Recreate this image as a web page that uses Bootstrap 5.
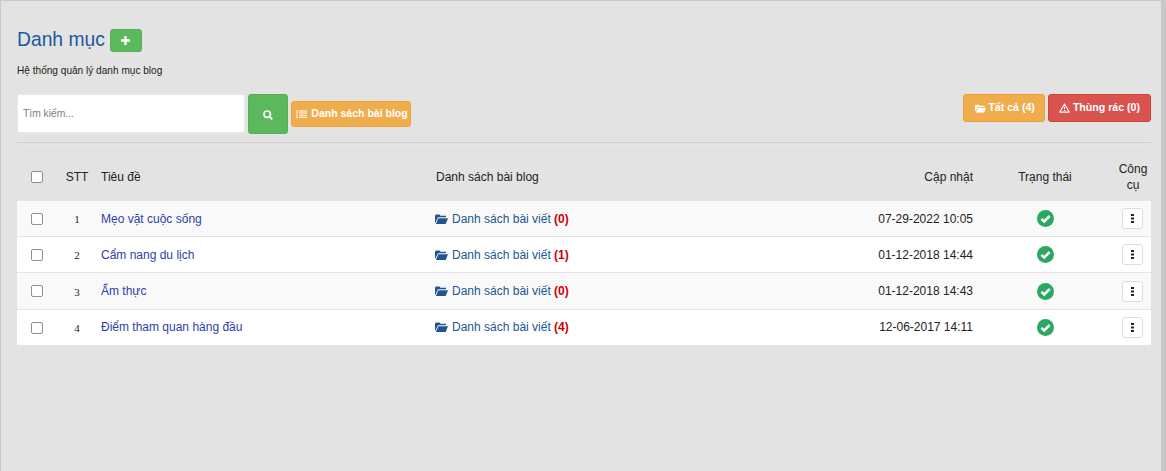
<!doctype html>
<html lang="vi"><head><meta charset="utf-8"><title>Danh mục</title>
<link href="https://cdn.jsdelivr.net/npm/bootstrap@5.3.0/dist/css/bootstrap.min.css" rel="stylesheet">
<style>
html,body{height:100%;overflow:hidden}
body{background:#e3e3e3;font-family:"Liberation Sans",Arial,sans-serif;font-size:12px;color:#222;}
.pg-shell{height:471px;border-top:1px solid #c8c8c8;border-left:1px solid #c8c8c8;border-right:5px solid #c8c8c8;padding:1px 10px 0 16px;}
.pg-head{padding-top:26px;height:92px}
.pg-title{font-size:19.3px;line-height:24px;color:#20589f;font-weight:400;margin:0}
.add-btn{width:32px;height:23px;padding:0;background:#5cb85c;border:1px solid #56b056;border-radius:3px;color:#fff;display:inline-flex;align-items:center;justify-content:center;margin-left:1px}
.pg-sub{font-size:10.1px;line-height:12px;margin:13px 0 0;color:#222}
.pg-tools{height:48px}
.srch{width:228px;height:39px;border:1px solid #e8e8e8;border-radius:2px;background:#fff;font-size:10.3px;padding:0 5px;color:#333}
.srch::placeholder{color:#808080;opacity:1}
.srch-btn{width:40px;height:40px;background:#5cb85c;border:1px solid #56b056;border-radius:3px;padding:2px 0 0;color:#fff;display:flex;align-items:center;justify-content:center}
.btn-o,.btn-r{font-size:10.6px;font-weight:700;color:#fff;border-radius:3px;display:inline-flex;align-items:center;gap:3px;white-space:nowrap}
.btn-o{background:#f0ad4e;border:1px solid #eea236}
.btn-r{background:#d9534f;border:1px solid #d43f3a}
.btn-o:hover{background:#f0ad4e;color:#fff}.btn-r:hover{background:#d9534f;color:#fff}
.btn-low{height:26px;width:120px;padding:0 0 0 2px;justify-content:center;margin-top:7px;gap:4px;font-size:10.5px}
.btn-tall{height:28px;padding:0 10px 0 10px}
.btn-all{padding-left:11px;gap:2px;padding-right:9px}
.tb-rule{border:0;border-top:1px solid #cdcdcd;opacity:1;margin:0 0 8px}
.cat-tbl{width:100%;table-layout:fixed;margin:0;font-size:12px;--bs-table-bg:transparent;border-top:1px solid #dfdfdf}
.cat-tbl th{font-weight:400;color:#222;vertical-align:middle;border-bottom:0;padding:0;height:49px;padding-top:1px;line-height:16px;background:transparent}
.cat-tbl td{height:36px;padding:0;vertical-align:middle;background:#fff;border-bottom:1px solid #e3e3e3;color:#222}
.cat-tbl tbody tr:nth-child(3) td{height:37px}
.cat-tbl tbody tr:nth-child(odd) td{background:#f9f9f9}
.cat-tbl tbody tr:first-child td{padding-top:1px}
.cat-tbl tbody tr:last-child td:not(:first-child):not(.num){padding-bottom:1px}
.cat-tbl a.t-link{color:#2c3fa8;text-decoration:none}
.cat-tbl a.l-link{color:#20578f;text-decoration:none}
.cat-tbl b{color:#c00}
.sq{display:block;width:12px;height:12px;margin:0 0 0 14px;border:1px solid #8f8f8f;border-radius:2px;background:#fff;appearance:none}
.cat-tbl td.num{font-family:"Liberation Serif",serif;font-size:11px;font-weight:500;padding-right:4px;padding-top:2px}
.hd-stt{padding-right:4px!important}
.hd-list{padding-left:1px!important}
.hd-tool{padding-right:2px!important}
.cell-tool{padding-right:4px!important}
.more{width:21px;height:21px;padding:0;background:#fff;border:1px solid #ddd;border-radius:3px;display:inline-flex;align-items:center;justify-content:center}
.more:hover{background:#fff}
.fold{vertical-align:-1px;margin-right:4px}
.chk{display:block;margin:0 auto}
</style></head><body>
<svg width="0" height="0" class="position-absolute"><defs>
 <symbol id="i-fold" viewBox="0 0 13 10"><path d="M1 .5h3.5l1 1.2H11v1.5H3L.3 8.8 0 8V1.5z"/><path d="M3.3 4.2H13L10.7 10H.8z"/></symbol>
 <symbol id="i-ok" viewBox="0 0 17 17"><circle cx="8.5" cy="8.5" r="8.5" fill="#28a862"/><path d="M4.4 8.8 7.2 11.5 12.7 6" fill="none" stroke="#fff" stroke-width="2.5"/></symbol>
 <symbol id="i-more" viewBox="0 0 3 9"><path d="M0 0h3v2H0zM0 3.5h3v2H0zM0 7h3v2H0z" fill="#222"/></symbol>
</defs></svg>
<div class="pg-shell">
 <div class="pg-head">
  <div class="d-flex align-items-center gap-1"><h1 class="pg-title">Danh mục</h1>
   <button class="btn add-btn" type="button" aria-label="Thêm"><svg width="9" height="9" viewBox="0 0 10 10"><path d="M3.7 0h2.6v3.7H10v2.6H6.3V10H3.7V6.3H0V3.7h3.7z" fill="#fff"/></svg></button></div>
  <p class="pg-sub">Hệ thống quản lý danh mục blog</p>
 </div>
 <div class="pg-tools d-flex justify-content-between">
  <div class="d-flex align-items-start" style="gap:3px">
   <input class="srch form-control" placeholder="Tìm kiếm...">
   <button class="btn srch-btn" type="button" aria-label="Tìm"><svg width="10" height="10" viewBox="0 0 10 10"><circle cx="4.2" cy="4.2" r="3.2" fill="none" stroke="#fff" stroke-width="1.6"/><path d="M6.6 6.6 9.2 9.2" stroke="#fff" stroke-width="2"/></svg></button>
   <a class="btn btn-o btn-low"><svg width="11" height="9" viewBox="0 0 11 9" fill="#fff"><path d="M0 .5h2v1H0zM3 .5h8v1H3zM0 2.6h2v1H0zM3 2.6h8v1H3zM0 4.7h2v1H0zM3 4.7h8v1H3zM0 6.8h2v1H0zM3 6.8h8v1H3z"/></svg>Danh sách bài blog</a>
  </div>
  <div class="d-flex align-items-start" style="gap:3px">
   <a class="btn btn-o btn-tall btn-all"><svg width="11" height="9" viewBox="0 0 13 10" fill="#fff"><use href="#i-fold"/></svg>Tất cả (4)</a>
   <a class="btn btn-r btn-tall"><svg width="11" height="10" viewBox="0 0 12 11"><path d="M6 1 11.2 10H.8z" fill="none" stroke="#fff" stroke-width="1.2" stroke-linejoin="round"/><path d="M5.4 4h1.2v3H5.4zM5.4 7.7h1.2v1.1H5.4z" fill="#fff"/></svg>Thùng rác (0)</a>
  </div>
 </div>
 <hr class="tb-rule">
 <table class="table cat-tbl">
  <colgroup><col style="width:40px"><col style="width:44px"><col style="width:334px"><col style="width:370px"><col style="width:168px"><col style="width:144px"><col></colgroup>
  <thead><tr>
   <th><input type="checkbox" class="sq" aria-label="Chọn tất cả"></th><th class="hd-stt text-center">STT</th><th>Tiêu đề</th><th class="hd-list">Danh sách bài blog</th>
   <th class="text-end">Cập nhật</th><th class="text-center">Trạng thái</th><th class="hd-tool text-center">Công cụ</th>
  </tr></thead>
  <tbody>
   <tr><td><input type="checkbox" class="sq" aria-label="Chọn"></td><td class="num text-center">1</td><td><a class="t-link" href="#">Mẹo vặt cuộc sống</a></td><td><a class="l-link" href="#"><svg class="fold" width="13" height="10" fill="#20578f"><use href="#i-fold"/></svg>Danh sách bài viết</a> <b>(0)</b></td><td class="text-end">07-29-2022 10:05</td><td><svg class="chk" width="17" height="17"><use href="#i-ok"/></svg></td><td class="cell-tool text-center"><button class="btn more" type="button" aria-label="Công cụ"><svg width="3" height="9"><use href="#i-more"/></svg></button></td></tr>
   <tr><td><input type="checkbox" class="sq" aria-label="Chọn"></td><td class="num text-center">2</td><td><a class="t-link" href="#">Cẩm nang du lịch</a></td><td><a class="l-link" href="#"><svg class="fold" width="13" height="10" fill="#20578f"><use href="#i-fold"/></svg>Danh sách bài viết</a> <b>(1)</b></td><td class="text-end">01-12-2018 14:44</td><td><svg class="chk" width="17" height="17"><use href="#i-ok"/></svg></td><td class="cell-tool text-center"><button class="btn more" type="button" aria-label="Công cụ"><svg width="3" height="9"><use href="#i-more"/></svg></button></td></tr>
   <tr><td><input type="checkbox" class="sq" aria-label="Chọn"></td><td class="num text-center">3</td><td><a class="t-link" href="#">Ẩm thực</a></td><td><a class="l-link" href="#"><svg class="fold" width="13" height="10" fill="#20578f"><use href="#i-fold"/></svg>Danh sách bài viết</a> <b>(0)</b></td><td class="text-end">01-12-2018 14:43</td><td><svg class="chk" width="17" height="17"><use href="#i-ok"/></svg></td><td class="cell-tool text-center"><button class="btn more" type="button" aria-label="Công cụ"><svg width="3" height="9"><use href="#i-more"/></svg></button></td></tr>
   <tr><td><input type="checkbox" class="sq" aria-label="Chọn"></td><td class="num text-center">4</td><td><a class="t-link" href="#">Điểm tham quan hàng đầu</a></td><td><a class="l-link" href="#"><svg class="fold" width="13" height="10" fill="#20578f"><use href="#i-fold"/></svg>Danh sách bài viết</a> <b>(4)</b></td><td class="text-end">12-06-2017 14:11</td><td><svg class="chk" width="17" height="17"><use href="#i-ok"/></svg></td><td class="cell-tool text-center"><button class="btn more" type="button" aria-label="Công cụ"><svg width="3" height="9"><use href="#i-more"/></svg></button></td></tr>
  </tbody>
 </table>
</div>
</body></html>
